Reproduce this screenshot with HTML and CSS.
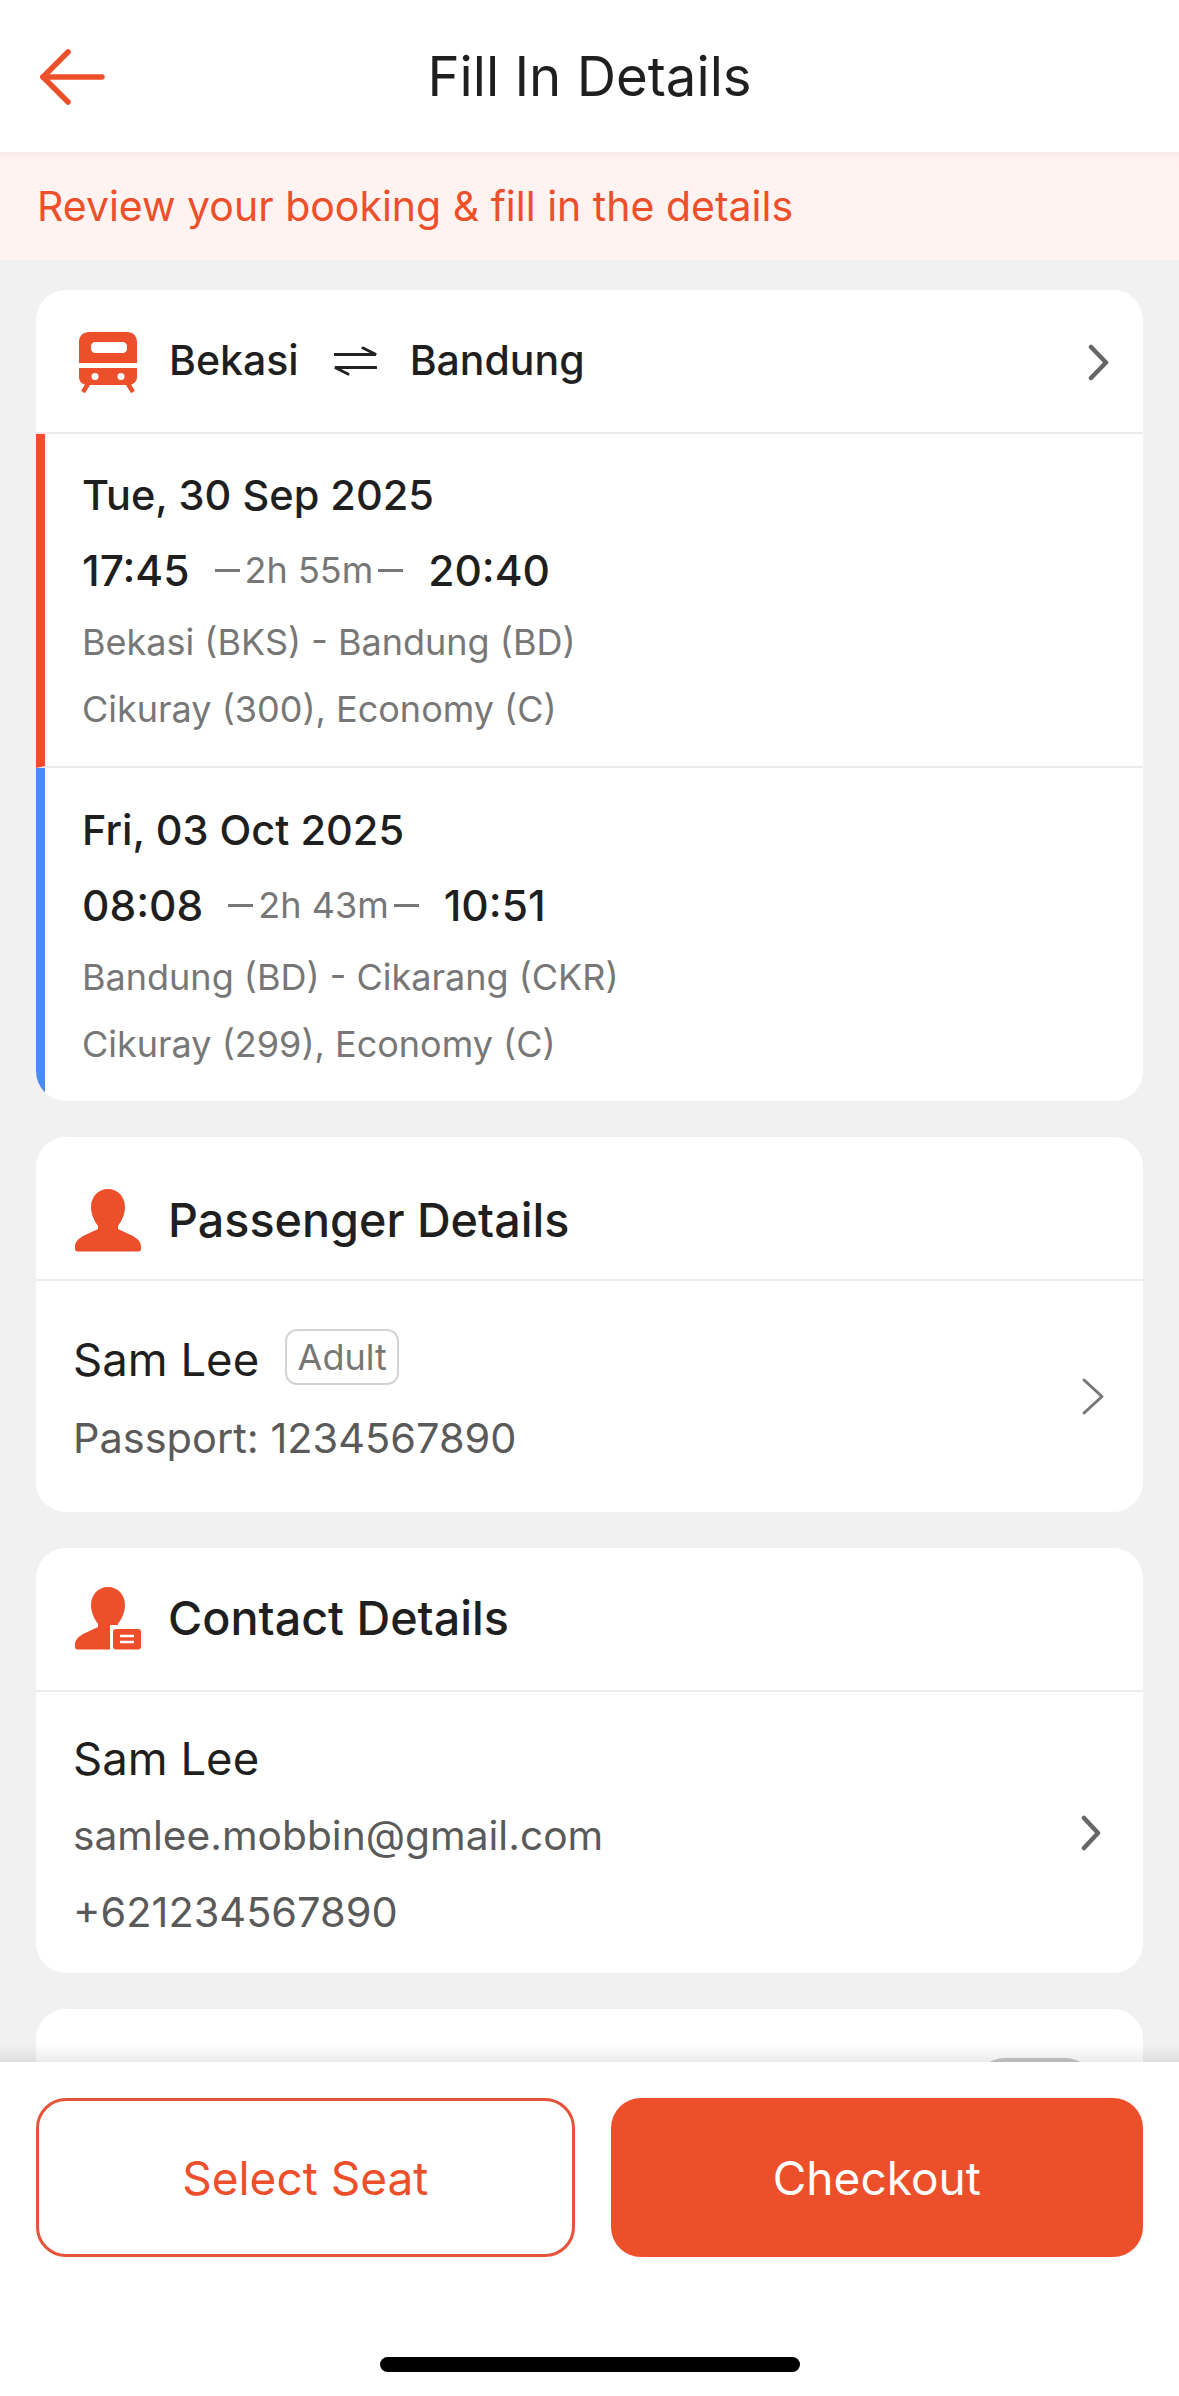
FILE: index.html
```html
<!DOCTYPE html>
<html>
<head>
  <title>Fill In Details</title>
  <link rel="stylesheet" href="styles.css">
</head>
<body>
  <div class="page">
    <div class="topbar">
      <svg class="back-icon" width="66" height="56" viewBox="0 0 66 56" fill="none" stroke="#ee4f2b" stroke-width="5.5" stroke-linecap="round" stroke-linejoin="round">
        <path d="M4 28H63"></path>
        <path d="M29 3L4 28L29 53"></path>
      </svg>
      <h1>Fill In Details</h1>
    </div>

    <div class="notice">Review your booking &amp; fill in the details</div>

    <div class="content">
      <div class="card">
        <div class="route-head">
          <svg class="train-icon" width="60" height="62" viewBox="0 0 60 62" fill="#ee4f2b">
            <path fill-rule="evenodd" d="M1 31V10C1 4 5 0 11 0H49C55 0 59 4 59 10V31ZM17 10C15 10 13 12 13 14V17C13 19 15 21 17 21H45C47 21 49 19 49 17V14C49 12 47 10 45 10Z"></path>
            <path fill-rule="evenodd" d="M1 36H59V45C59 50 55 53 50 53H10C5 53 1 50 1 45ZM17 41A3.5 3.5 0 1 0 17 48A3.5 3.5 0 1 0 17 41ZM43 41A3.5 3.5 0 1 0 43 48A3.5 3.5 0 1 0 43 41Z"></path>
            <path d="M10 52L5 60M50 52L55 60" stroke="#ee4f2b" stroke-width="4.5" fill="none"></path>
          </svg>
          <span class="city">Bekasi</span>
          <svg class="swap-icon" width="43" height="30" viewBox="0 0 43 30" fill="none" stroke="#222" stroke-width="3" stroke-linecap="round">
            <path d="M1 8.5H42L29 2"></path>
            <path d="M42 21.5H1L14 28"></path>
          </svg>
          <span class="city">Bandung</span>
          <svg class="chev chev-head" width="21" height="37" viewBox="0 0 21 37" fill="none" stroke="#666" stroke-width="4.5" stroke-linecap="round" stroke-linejoin="round">
            <path d="M3 3L18 18.5L3 34"></path>
          </svg>
        </div>

        <div class="trip trip-out">
          <div class="trip-date">Tue, 30 Sep 2025</div>
          <div class="trip-times">
            <span class="time">17:45</span>
            <span class="dash"></span>
            <span class="duration">2h 55m</span>
            <span class="dash"></span>
            <span class="time">20:40</span>
          </div>
          <div class="trip-line">Bekasi (BKS) - Bandung (BD)</div>
          <div class="trip-line">Cikuray (300), Economy (C)</div>
        </div>

        <div class="trip trip-back">
          <div class="trip-date">Fri, 03 Oct 2025</div>
          <div class="trip-times">
            <span class="time">08:08</span>
            <span class="dash"></span>
            <span class="duration">2h 43m</span>
            <span class="dash"></span>
            <span class="time">10:51</span>
          </div>
          <div class="trip-line">Bandung (BD) - Cikarang (CKR)</div>
          <div class="trip-line">Cikuray (299), Economy (C)</div>
        </div>
      </div>

      <div class="card">
        <div class="section-head passenger-head">
          <svg class="person-icon" width="66" height="63" viewBox="0 0 66 63" fill="#ee4f2b">
            <path d="M33 0C43 0 50 8 50 18C50 26 46 33 43 37V40L58 47C63 50 66 53 66 58V60Q66 62.5 63 62.5H3Q0 62.5 0 60V58C0 53 3 50 8 47L23 40V37C20 33 16 26 16 18C16 8 23 0 33 0Z"></path>
          </svg>
          <h2>Passenger Details</h2>
        </div>
        <div class="section-body passenger-body">
          <div class="section-text">
            <div class="name-row">
              <span class="name">Sam Lee</span>
              <span class="badge">Adult</span>
            </div>
            <div class="detail passport">Passport: 1234567890</div>
          </div>
          <svg class="chev" width="24" height="39" viewBox="0 0 24 39" fill="none" stroke="#777" stroke-width="3" stroke-linecap="round" stroke-linejoin="round">
            <path d="M3 3L21 19.5L3 36"></path>
          </svg>
        </div>
      </div>

      <div class="card">
        <div class="section-head contact-head">
          <svg class="person-icon" width="66" height="63" viewBox="0 0 66 63" fill="#ee4f2b">
            <path d="M33 0C43 0 50 8 50 18C50 26 46 33 43 37V40L58 47C63 50 66 53 66 58V60Q66 62.5 63 62.5H3Q0 62.5 0 60V58C0 53 3 50 8 47L23 40V37C20 33 16 26 16 18C16 8 23 0 33 0Z"></path>
            <rect x="35" y="38" width="31" height="25" fill="#fff"></rect>
            <rect x="38" y="42" width="28" height="20.5" rx="3"></rect>
            <path d="M45 49H59M45 55H59" stroke="#fff" stroke-width="2.5"></path>
          </svg>
          <h2>Contact Details</h2>
        </div>
        <div class="section-body contact-body">
          <div class="section-text">
            <div class="name">Sam Lee</div>
            <div class="detail email">samlee.mobbin@gmail.com</div>
            <div class="detail phone">+621234567890</div>
          </div>
          <svg class="chev" width="20" height="36" viewBox="0 0 20 36" fill="none" stroke="#666" stroke-width="4.5" stroke-linecap="round" stroke-linejoin="round">
            <path d="M3 3L17 18L3 33"></path>
          </svg>
        </div>
      </div>

      <div class="card last-card">
        <div class="toggle"></div>
      </div>
    </div>

    <div class="footer">
      <div class="actions">
        <div class="btn btn-outline">Select Seat</div>
        <div class="btn btn-solid">Checkout</div>
      </div>
      <div class="home-bar"></div>
    </div>
  </div>
</body>
</html>
```

FILE: styles.css
```css
* {
  box-sizing: border-box;
}
body {
  margin: 0;
  font-family: 'Inter', 'Liberation Sans', sans-serif;
  color: #1f1f1f;
  background: #f1f1f1;
}
.page {
  display: flex;
  flex-direction: column;
  height: 2396px;
  overflow: hidden;
}

/* Top bar */
.topbar {
  position: relative;
  display: flex;
  align-items: center;
  justify-content: center;
  height: 152px;
  background: #fff;
}
.back-icon {
  position: absolute;
  left: 39px;
  top: 49px;
}
.topbar h1 {
  margin: 0;
  font-size: 54.5px;
  font-weight: 400;
}
.notice {
  height: 108px;
  padding-left: 37px;
  line-height: 108px;
  font-size: 41px;
  color: #ee4f2b;
  background: #fff3f1;
  box-shadow: inset 0 8px 8px -6px rgba(0, 0, 0, 0.05);
}

/* Cards */
.content {
  flex: 1;
  display: flex;
  flex-direction: column;
  gap: 36px;
  padding: 30px 36px 0;
  overflow: hidden;
  position: relative;
}
.content:after {
  content: '';
  position: absolute;
  left: 0;
  right: 0;
  bottom: 0;
  height: 18px;
  background: linear-gradient(to bottom, rgba(0, 0, 0, 0), rgba(0, 0, 0, 0.08));
}
.card {
  flex-shrink: 0;
  background: #fff;
  border-radius: 30px;
  overflow: hidden;
}
.route-head {
  display: flex;
  align-items: center;
  height: 144px;
  padding: 0 34px 0 42px;
  border-bottom: 2px solid #ebebeb;
}
.city {
  margin-bottom: 2px;
  font-size: 41px;
  font-weight: 500;
}
.train-icon {
  margin: 3px 31px 0 0;
}
.swap-icon {
  margin: 0 33px 0 35px;
}
.chev-head {
  margin: 3px 0 0 auto;
}

.trip {
  display: flex;
  flex-direction: column;
  padding: 31px 0 0 37px;
  border-left: 9px solid #ee4f2b;
}
.trip-out {
  height: 334px;
  border-bottom: 2px solid #ebebeb;
}
.trip-back {
  height: 333px;
  padding-top: 32px;
  border-left-color: #4a8cf0;
}
.trip-date {
  font-size: 41.5px;
  font-weight: 500;
  line-height: 60px;
}
.trip-times {
  display: flex;
  align-items: center;
  margin-top: 15px;
  height: 60px;
}
.time {
  font-size: 42.5px;
  font-weight: 500;
}
.duration {
  font-size: 36px;
  color: #777;
}
.dash {
  width: 25px;
  height: 3px;
  background: #777;
}
.time + .dash {
  margin: 0 5px 0 25px;
}
.duration + .dash {
  margin: 0 25px 0 5px;
}
.trip-line {
  margin-top: 17px;
  font-size: 36px;
  line-height: 50px;
  color: #777;
}

.section-head {
  display: flex;
  align-items: center;
  height: 144px;
  padding-left: 39px;
  border-bottom: 2px solid #ebebeb;
}
.passenger-head {
  padding-top: 24px;
}
.contact-head {
  padding-bottom: 2px;
}
.person-icon {
  margin-right: 27px;
}
.section-head h2 {
  margin: 0;
  font-size: 46.7px;
  font-weight: 500;
}
.section-body {
  display: flex;
  align-items: center;
  justify-content: space-between;
  padding: 0 38px 0 37px;
}
.section-text {
  align-self: flex-start;
}
.passenger-body {
  height: 231px;
}
.passenger-body .section-text {
  padding-top: 47px;
}
.contact-body {
  height: 281px;
  padding-right: 42px;
}
.contact-body .section-text {
  padding-top: 35px;
}
.name-row {
  display: flex;
  align-items: flex-start;
  gap: 26px;
}
.name {
  font-size: 45.5px;
  line-height: 64px;
}
.badge {
  display: flex;
  align-items: center;
  justify-content: center;
  width: 114px;
  height: 56px;
  margin-top: 1px;
  border: 2px solid #d4d4d4;
  border-radius: 12px;
  font-size: 36px;
  color: #777;
}
.detail {
  font-size: 40.7px;
  line-height: 56px;
  color: #5a5a5a;
}
.passport {
  margin-top: 18px;
  font-size: 41.5px;
}
.email {
  margin-top: 17px;
}
.phone {
  margin-top: 20px;
  font-size: 41.5px;
}
.last-card {
  height: 200px;
  position: relative;
}
.toggle {
  position: absolute;
  top: 49px;
  right: 48px;
  width: 120px;
  height: 60px;
  border-radius: 30px;
  background: #c8c8c8;
}

/* Bottom bar */
.footer {
  display: flex;
  flex-direction: column;
  align-items: center;
  height: 334px;
  padding: 36px 36px 0;
  background: #fff;
}
.actions {
  display: flex;
  gap: 36px;
  width: 100%;
}
.btn {
  flex: 1;
  display: flex;
  align-items: center;
  justify-content: center;
  height: 159px;
  border-radius: 30px;
  font-size: 46px;
}
.btn-outline {
  border: 3px solid #e5533a;
  color: #ee4f2b;
}
.btn-solid {
  background: #ee4f2b;
  color: #fff;
}
.home-bar {
  width: 420px;
  height: 15px;
  margin-top: 100px;
  border-radius: 8px;
  background: #000;
}
```
